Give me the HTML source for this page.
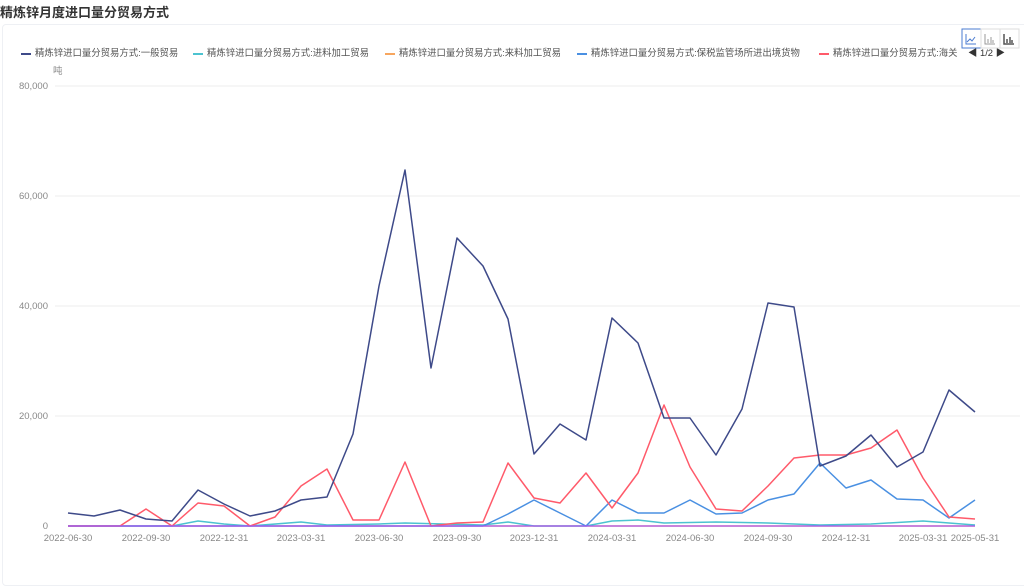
<!DOCTYPE html><html><head><meta charset="utf-8"><style>
body{margin:0;width:1024px;height:571px;background:#fff;font-family:"Liberation Sans","Noto Sans CJK SC",sans-serif;overflow:hidden;position:relative}
.t{position:absolute;left:0;top:2px;font-size:13px;font-weight:bold;color:#333}
.card{position:absolute;left:2px;top:24px;width:1030px;height:560px;border:1px solid #eef0f4;border-radius:4px}
.lg{position:absolute;top:45px;font-size:9.4px;color:#555;white-space:nowrap}
.lg i{display:inline-block;width:10px;height:2px;vertical-align:middle;margin-right:4px}
.ax{font-size:9.5px;fill:#888}
</style></head><body>
<div class="t">精炼锌月度进口量分贸易方式</div>
<div class="card"></div>
<div class="lg" style="left:21px"><i style="background:#3e4a89"></i>精炼锌进口量分贸易方式:一般贸易</div>
<div class="lg" style="left:193px"><i style="background:#4cc3d0"></i>精炼锌进口量分贸易方式:进料加工贸易</div>
<div class="lg" style="left:385px"><i style="background:#f7a65e"></i>精炼锌进口量分贸易方式:来料加工贸易</div>
<div class="lg" style="left:577px"><i style="background:#4a90e2"></i>精炼锌进口量分贸易方式:保税监管场所进出境货物</div>
<div class="lg" style="left:819px;width:146px;overflow:hidden"><i style="background:#ff5a6a"></i>精炼锌进口量分贸易方式:海关</div>
<div class="lg" style="left:968px;color:#333">◀ 1/2 ▶</div>
<svg width="1024" height="571" style="position:absolute;left:0;top:0">
<rect x="962" y="29" width="19" height="19" fill="none" stroke="#4a7bd0" stroke-width="1"/>
<rect x="981" y="29" width="19" height="19" fill="none" stroke="#ddd"/>
<rect x="1000" y="29" width="19" height="19" fill="none" stroke="#ddd"/>
<path d="M966 34v10h10M967 42l3-3 2 2 3-4" fill="none" stroke="#4a7bd0"/>
<path d="M985 34v10h10M988 43v-4M991 43v-6M993 43v-3" fill="none" stroke="#999"/>
<path d="M1004 34v10h10M1007 43v-4M1010 43v-6M1012 43v-3" fill="none" stroke="#555" stroke-width="1.5"/>
<text x="53" y="74" class="ax">吨</text>
<g stroke="#eee"><line x1="55" y1="86" x2="1020" y2="86"/><line x1="55" y1="196" x2="1020" y2="196"/><line x1="55" y1="306" x2="1020" y2="306"/><line x1="55" y1="416" x2="1020" y2="416"/></g>
<g class="ax" text-anchor="end"><text x="48" y="89">80,000</text><text x="48" y="199">60,000</text><text x="48" y="309">40,000</text><text x="48" y="419">20,000</text><text x="48" y="529">0</text></g>
<g class="ax" text-anchor="middle"><text x="68" y="541">2022-06-30</text><text x="146" y="541">2022-09-30</text><text x="224" y="541">2022-12-31</text><text x="301" y="541">2023-03-31</text><text x="379" y="541">2023-06-30</text><text x="457" y="541">2023-09-30</text><text x="534" y="541">2023-12-31</text><text x="612" y="541">2024-03-31</text><text x="690" y="541">2024-06-30</text><text x="768" y="541">2024-09-30</text><text x="846" y="541">2024-12-31</text><text x="923" y="541">2025-03-31</text><text x="975" y="541">2025-05-31</text></g>
<g fill="none" stroke-width="1.5" stroke-linejoin="round">
<polyline stroke="#f7a65e" points="68,526 975,526"/>
<polyline stroke="#4cc3d0" points="68,526 172,526 198,521 224,524 250,526 301,522 327,525 379,524 405,523 483,525 508,522 534,526 586,526 612,521 638,520 664,523 716,522 768,523 820,525 871,524 923,521 949,523 975,525"/>
<polyline stroke="#4a90e2" points="68,526 483,526 508,514 534,500 560,513 586,526 612,500 638,513 664,513 690,500 716,514 742,513 768,500 794,494 820,463 846,488 871,480 897,499 923,500 949,518 975,500"/>
<polyline stroke="#ff5a6a" points="68,526 94,526 120,526 146,509 172,526 198,503 224,506 250,526 275,517 301,486 327,469 353,520 379,520 405,462 431,526 457,523 483,522 508,463 534,498 560,503 586,473 612,508 638,473 664,405 690,467 716,509 742,511 768,486 794,458 820,455 846,455 871,448 897,430 923,478 949,517 975,519"/>
<polyline stroke="#3e4a89" points="68,513 94,516 120,510 146,519 172,521 198,490 224,504 250,516 275,511 301,500 327,497 353,434 379,286 405,170 431,368 457,238 483,266 508,319 534,454 560,424 586,440 612,318 638,343 664,418 690,418 716,455 742,409 768,303 794,307 820,466 846,456 871,435 897,467 923,452 949,390 975,412"/>
<polyline stroke="#a855f7" points="68,526 975,526" stroke-width="1.2"/>
</g>
</svg>
</body></html>
